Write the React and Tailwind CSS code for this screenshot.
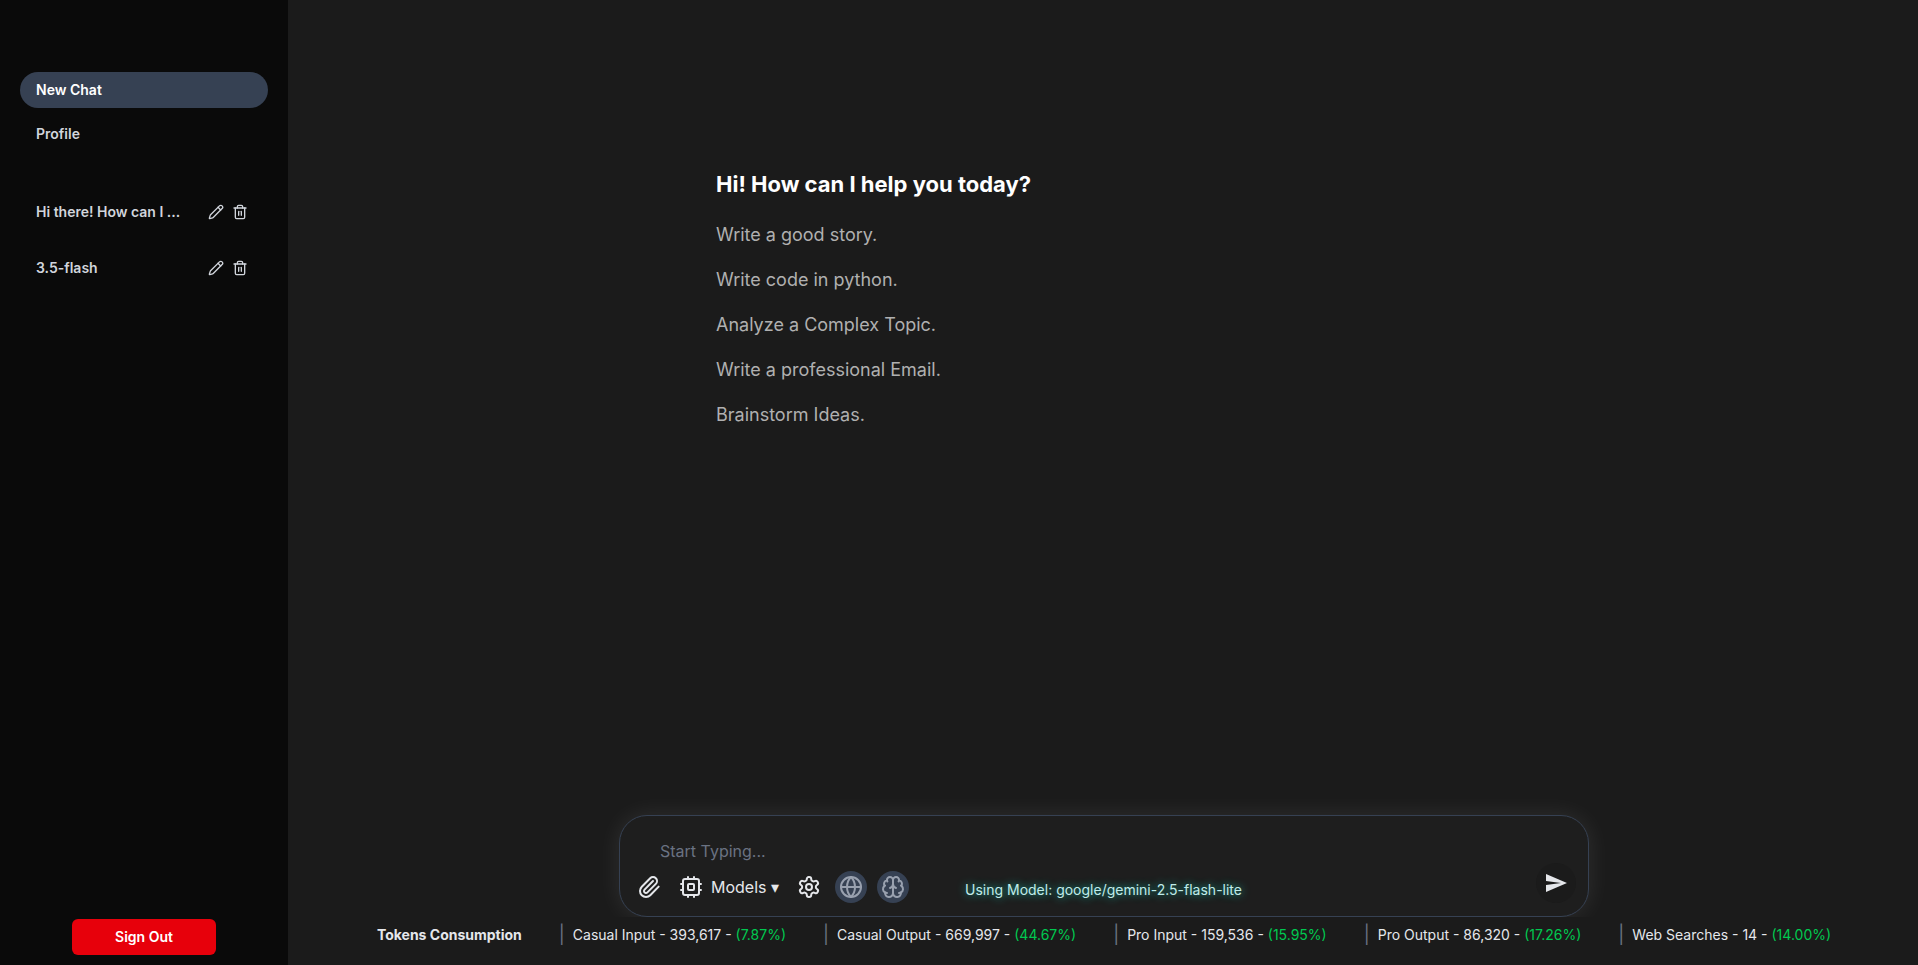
import { Globe, Paperclip, Pencil, Trash2 } from 'lucide-react';
import { MdSend } from 'react-icons/md';

const CHATS = [
  { id: 1, title: 'Hi there! How can I ...' },
  { id: 2, title: '3.5-flash' },
];

const SUGGESTIONS = [
  'Write a good story.',
  'Write code in python.',
  'Analyze a Complex Topic.',
  'Write a professional Email.',
  'Brainstorm Ideas.',
];

const USAGE = [
  { label: 'Casual Input', count: '393,617', percent: '7.87%' },
  { label: 'Casual Output', count: '669,997', percent: '44.67%' },
  { label: 'Pro Input', count: '159,536', percent: '15.95%' },
  { label: 'Pro Output', count: '86,320', percent: '17.26%' },
  { label: 'Web Searches', count: '14', percent: '14.00%' },
];

/**
 * Shared 24px outline frame for the toolbar icons
 */
function OutlineIcon({ children }) {
  return (
    <svg
      width="24"
      height="24"
      viewBox="0 0 24 24"
      fill="none"
      stroke="currentColor"
      strokeWidth="2"
      strokeLinecap="round"
      strokeLinejoin="round"
      aria-hidden="true"
    >
      {children}
    </svg>
  );
}

function CpuIcon() {
  return (
    <OutlineIcon>
      <rect x="4" y="4" width="16" height="16" rx="2" />
      <rect x="9" y="9" width="6" height="6" rx="1" />
      <path d="M15 2v2M15 20v2M2 15h2M2 9h2M20 15h2M20 9h2M9 2v2M9 20v2" />
    </OutlineIcon>
  );
}

function GearIcon() {
  return (
    <OutlineIcon>
      <path d="M12.22 2h-.44a2 2 0 0 0-2 2v.18a2 2 0 0 1-1 1.73l-.43.25a2 2 0 0 1-2 0l-.15-.08a2 2 0 0 0-2.73.73l-.22.38a2 2 0 0 0 .73 2.73l.15.1a2 2 0 0 1 1 1.72v.51a2 2 0 0 1-1 1.74l-.15.09a2 2 0 0 0-.73 2.73l.22.38a2 2 0 0 0 2.73.73l.15-.08a2 2 0 0 1 2 0l.43.25a2 2 0 0 1 1 1.73V20a2 2 0 0 0 2 2h.44a2 2 0 0 0 2-2v-.18a2 2 0 0 1 1-1.73l.43-.25a2 2 0 0 1 2 0l.15.08a2 2 0 0 0 2.73-.73l.22-.39a2 2 0 0 0-.73-2.73l-.15-.08a2 2 0 0 1-1-1.74v-.5a2 2 0 0 1 1-1.74l.15-.09a2 2 0 0 0 .73-2.73l-.22-.38a2 2 0 0 0-2.73-.73l-.15.08a2 2 0 0 1-2 0l-.43-.25a2 2 0 0 1-1-1.73V4a2 2 0 0 0-2-2z" />
      <circle cx="12" cy="12" r="3" />
    </OutlineIcon>
  );
}

function BrainIcon() {
  return (
    <OutlineIcon>
      <path d="M12 5a3 3 0 1 0-5.997.125 4 4 0 0 0-2.526 5.77 4 4 0 0 0 .556 6.588A4 4 0 1 0 12 18Z" />
      <path d="M12 5a3 3 0 1 1 5.997.125 4 4 0 0 1 2.526 5.77 4 4 0 0 1-.556 6.588A4 4 0 1 1 12 18Z" />
      <path d="M15 13a4.5 4.5 0 0 1-3-4 4.5 4.5 0 0 1-3 4" />
      <path d="M17.599 6.5a3 3 0 0 0 .399-1.375" />
      <path d="M6.003 5.125A3 3 0 0 0 6.401 6.5" />
      <path d="M3.477 10.896a4 4 0 0 1 .585-.396" />
      <path d="M19.938 10.5a4 4 0 0 1 .585.396" />
      <path d="M6 18a4 4 0 0 1-1.967-.516" />
      <path d="M19.967 17.484A4 4 0 0 1 18 18" />
    </OutlineIcon>
  );
}

function ChatRow({ chat }) {
  return (
    <li className="flex h-14 items-center px-4">
      <a href={`#chat-${chat.id}`} className="min-w-0 flex-1 truncate">{chat.title}</a>
      <div className="flex gap-2 pr-1">
        <button type="button" aria-label={`Rename ${chat.title}`}>
          <Pencil size={16} aria-hidden="true" />
        </button>
        <button type="button" aria-label={`Delete ${chat.title}`}>
          <Trash2 size={16} aria-hidden="true" />
        </button>
      </div>
    </li>
  );
}

function Sidebar() {
  return (
    <aside className="flex w-72 shrink-0 flex-col bg-[#0a0a0a] px-5 pt-18 pb-2.5 text-sm font-semibold text-gray-300">
      <nav className="flex flex-col gap-2">
        <a href="#new" className="rounded-full bg-gray-700 px-4 py-2 text-white">New Chat</a>
        <a href="#profile" className="rounded-full px-4 py-2">Profile</a>
      </nav>
      <ul className="mt-8 flex flex-col">
        {CHATS.map((chat) => (
          <ChatRow key={chat.id} chat={chat} />
        ))}
      </ul>
      <button type="button" className="mx-auto mt-auto w-36 rounded-md bg-[#e7000b] py-2 text-white">
        Sign Out
      </button>
    </aside>
  );
}

function ToggleButton({ label, children }) {
  return (
    <button
      type="button"
      aria-label={label}
      aria-pressed="true"
      className="flex size-8 items-center justify-center rounded-full bg-gray-700 text-gray-400"
    >
      {children}
    </button>
  );
}

function Composer() {
  return (
    <form className="mx-auto w-full max-w-[970px] rounded-[28px] border border-gray-700 bg-[#1e1e1e] pt-[23px] pr-3 pb-[13px] pl-[17px] shadow-[0_0_25px_rgba(255,255,255,0.09)]">
      <input
        type="text"
        aria-label="Message"
        placeholder="Start Typing..."
        className="block h-6 w-full bg-transparent px-[23px] text-base text-gray-200 outline-none placeholder:text-gray-500"
      />
      <div className="flex items-end text-gray-200">
        <div className="flex h-8 items-center gap-[18px]">
          <button type="button" aria-label="Attach file">
            <Paperclip size={24} aria-hidden="true" />
          </button>
          <button type="button" className="flex items-center gap-2">
            <CpuIcon />
            Models ▾
          </button>
          <button type="button" aria-label="Settings">
            <GearIcon />
          </button>
        </div>
        <div className="ml-3.5 flex gap-2.5">
          <ToggleButton label="Web search">
            <Globe size={24} aria-hidden="true" />
          </ToggleButton>
          <ToggleButton label="Thinking">
            <BrainIcon />
          </ToggleButton>
        </div>
        <p className="ml-14 pb-[3px] text-sm text-[#c0ebe9] [text-shadow:0_0_8px_#14b8a6]">
          Using Model: google/gemini-2.5-flash-lite
        </p>
        <button
          type="submit"
          aria-label="Send"
          className="ml-auto flex size-10 items-center justify-center rounded-full bg-[#1b1b1b]"
        >
          <MdSend size={24} aria-hidden="true" />
        </button>
      </div>
    </form>
  );
}

function UsageBar() {
  return (
    <footer className="bg-[#1b1b1b] pb-3">
      <div className="flex h-9 items-center justify-center gap-[37px] text-sm whitespace-nowrap text-gray-200">
        <h2 className="font-bold">Tokens Consumption</h2>
        {USAGE.map((item) => (
          <div key={item.label} className="flex items-center gap-2">
            <span className="text-lg text-gray-500" aria-hidden="true">|</span>
            <p>
              {item.label} - {item.count} - <span className="text-[#00c950]">({item.percent})</span>
            </p>
          </div>
        ))}
      </div>
    </footer>
  );
}

export default function App() {
  return (
    <div className="flex min-h-screen bg-[#1b1b1b] font-['Inter',sans-serif]">
      <Sidebar />
      <main className="flex min-w-0 flex-1 flex-col pl-0.5">
        <section className="mx-auto mt-42 w-full max-w-[776px]">
          <h1 className="text-[22px] leading-8 font-bold text-white">Hi! How can I help you today?</h1>
          <ul className="mt-3 text-lg leading-[45px] text-[#b0b0b0]">
            {SUGGESTIONS.map((text) => (
              <li key={text}>{text}</li>
            ))}
          </ul>
        </section>
        <div className="mt-auto">
          <Composer />
          <UsageBar />
        </div>
      </main>
    </div>
  );
}
